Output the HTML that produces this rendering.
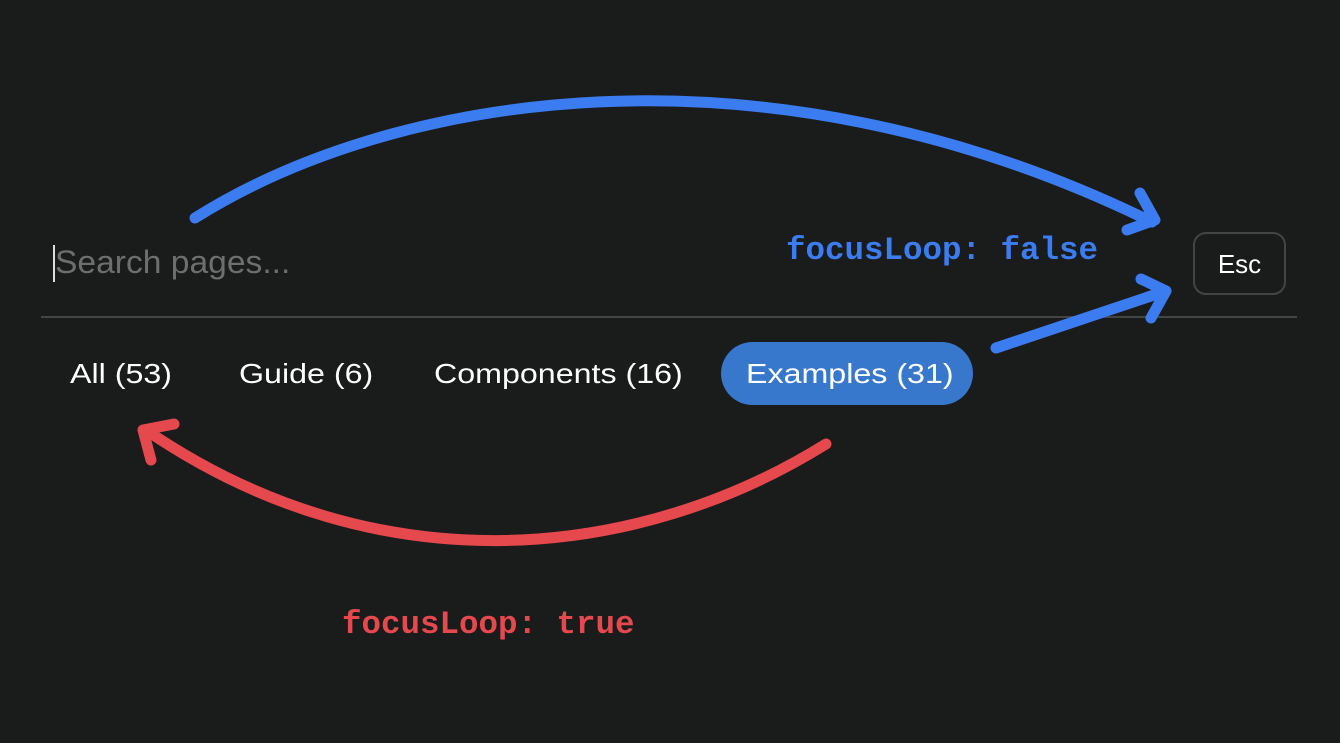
<!DOCTYPE html>
<html><head><style>
body{margin:0;width:1340px;height:743px;background:#1a1b1b;position:relative;overflow:hidden;font-family:"Liberation Sans",sans-serif}
.a{position:absolute;white-space:nowrap}
.tab{font-size:28px;color:#fff;top:358px;transform-origin:0 0;transform:scaleX(1.15)}
.mono{font-family:"Liberation Mono",monospace;font-weight:bold;font-size:32.5px}
</style></head><body>
<div class="a" style="left:53px;top:245px;width:2px;height:37px;background:#ddd"></div>
<div class="a" style="left:55px;top:244px;font-size:32px;color:#6e6e6e;transform-origin:0 0;transform:scaleX(1.05)">Search pages...</div>
<div class="a" style="left:41px;top:316px;width:1256px;height:2px;background:#444"></div>
<div class="a" style="left:1193px;top:232px;width:93px;height:63px;border:2px solid #444;border-radius:13px;box-sizing:border-box;color:#fff;font-size:26px;text-align:center;line-height:60px">Esc</div>
<div class="a tab" style="left:70px">All (53)</div>
<div class="a tab" style="left:239px">Guide (6)</div>
<div class="a tab" style="left:434px">Components (16)</div>
<div class="a" style="left:721px;top:342px;width:252px;height:63px;border-radius:32px;background:#3778cc"></div>
<div class="a tab" style="left:746px">Examples (31)</div>
<div class="a mono" style="left:786px;top:232px;color:#3b7cf0">focusLoop: false</div>
<div class="a mono" style="left:342px;top:606px;color:#e5484d">focusLoop: true</div>
<svg class="a" style="left:0;top:0" width="1340" height="743" fill="none" stroke-width="11" stroke-linecap="round" stroke-linejoin="round">
<g stroke="#3b7cf0">
<path d="M195 218 C 390 95, 760 30, 1152 222"/>
<path d="M1140 193 L1155 220 L1127 230"/>
<path d="M996 348 L1166 291"/>
<path d="M1141 279 L1166 291 L1151 318"/>
</g>
<g stroke="#e5484d">
<path d="M826 444 C 640 560, 380 590, 146 430"/>
<path d="M174 424 L143 430 L151 460"/>
</g>
</svg>
</body></html>
